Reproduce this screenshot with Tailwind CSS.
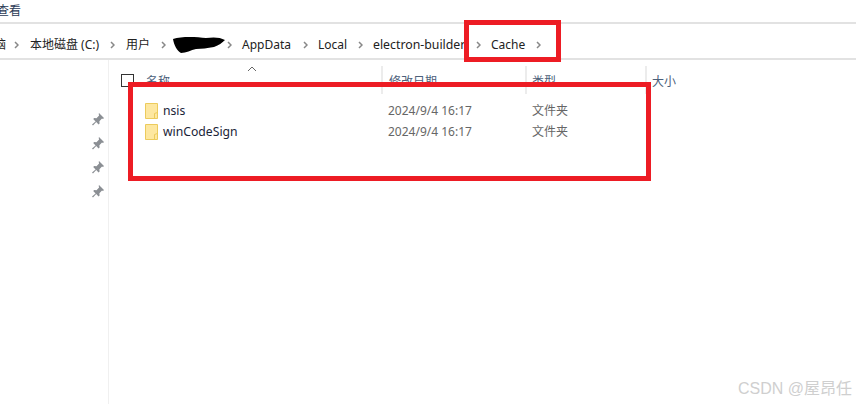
<!DOCTYPE html>
<html lang="zh-CN">
<head>
    <meta charset="UTF-8">
    <title>Cache</title>
    <script src="https://cdn.jsdelivr.net/npm/@tailwindcss/browser@4"></script>
</head>
<body class="relative w-[856px] h-[404px] overflow-hidden bg-white text-[12px] text-[#222] font-['Noto_Sans','Noto_Sans_CJK_SC',sans-serif]">
    <!-- menu -->
    <div class="h-[24px] border-b-2 border-[#e2e2e2] overflow-hidden">
        <span class="block ml-[-3px] mt-[3px] text-[#2b3a55] leading-[16px]">查看</span>
    </div>

    <!-- address bar -->
    <div class="h-[36px] border-b-2 border-[#e2e2e2] flex items-center overflow-hidden pt-[8px]">
        <span class="w-[6px] overflow-hidden flex justify-end shrink-0"><span class="shrink-0">脑</span></span>
        <svg class="ml-[8px] w-[5px] h-[8px] shrink-0" viewBox="0 0 5 8"><path d="M1 1l3 3-3 3" fill="none" stroke="#888" stroke-width="1.5"/></svg>
        <span class="ml-[11px] w-[70px] shrink-0 whitespace-nowrap">本地磁盘 (C:)</span>
        <svg class="ml-[10px] w-[5px] h-[8px] shrink-0" viewBox="0 0 5 8"><path d="M1 1l3 3-3 3" fill="none" stroke="#888" stroke-width="1.5"/></svg>
        <span class="ml-[11px] w-[25px] shrink-0">用户</span>
        <svg class="ml-[10px] w-[5px] h-[8px] shrink-0" viewBox="0 0 5 8"><path d="M1 1l3 3-3 3" fill="none" stroke="#888" stroke-width="1.5"/></svg>
        <svg class="ml-[6px] w-[54px] h-[18px] shrink-0" viewBox="0 0 54 18"><path d="M1 3C10 0 25 1 34 2c7-1 14-1 19 2-3 3-6 5-11 7-7 1-12 2-18 2-5 1-10 4-15 4C5 15 2 9 1 3z" fill="#000"/></svg>
        <svg class="ml-[1px] w-[5px] h-[8px] shrink-0" viewBox="0 0 5 8"><path d="M1 1l3 3-3 3" fill="none" stroke="#888" stroke-width="1.5"/></svg>
        <span class="ml-[10px] w-[51px] shrink-0">AppData</span>
        <svg class="ml-[10px] w-[5px] h-[8px] shrink-0" viewBox="0 0 5 8"><path d="M1 1l3 3-3 3" fill="none" stroke="#888" stroke-width="1.5"/></svg>
        <span class="ml-[10px] w-[30px] shrink-0">Local</span>
        <svg class="ml-[10px] w-[5px] h-[8px] shrink-0" viewBox="0 0 5 8"><path d="M1 1l3 3-3 3" fill="none" stroke="#888" stroke-width="1.5"/></svg>
        <span class="ml-[10px] w-[93px] shrink-0 whitespace-nowrap text-[12.3px]">electron-builder</span>
        <svg class="ml-[10px] w-[5px] h-[8px] shrink-0" viewBox="0 0 5 8"><path d="M1 1l3 3-3 3" fill="none" stroke="#888" stroke-width="1.5"/></svg>
        <span class="ml-[10px] w-[36px] shrink-0">Cache</span>
        <svg class="ml-[9px] w-[5px] h-[8px] shrink-0" viewBox="0 0 5 8"><path d="M1 1l3 3-3 3" fill="none" stroke="#888" stroke-width="1.5"/></svg>
    </div>

    <div class="flex h-[344px]">
        <!-- quick access pins -->
        <div class="w-[109px] shrink-0 border-r border-[#f0f0f0] flex flex-col items-end pt-[51px] pr-[2px] gap-[8px]">
            <svg class="w-[16px] h-[16px]" viewBox="0 0 16 16"><path d="M9 2l5 5-1 1-1-.4-2.6 2.6.2 2.3-1 1-2.4-2.5L3 14.6l-1-1 3.6-3.2L3.200 8l1-1 2.300.2L9.100 4.600 8.700 3.100z" fill="#8b8f94"/></svg>
            <svg class="w-[16px] h-[16px]" viewBox="0 0 16 16"><path d="M9 2l5 5-1 1-1-.4-2.6 2.6.2 2.3-1 1-2.4-2.5L3 14.6l-1-1 3.6-3.2L3.200 8l1-1 2.300.2L9.100 4.600 8.700 3.100z" fill="#8b8f94"/></svg>
            <svg class="w-[16px] h-[16px]" viewBox="0 0 16 16"><path d="M9 2l5 5-1 1-1-.4-2.6 2.6.2 2.3-1 1-2.4-2.5L3 14.6l-1-1 3.6-3.2L3.200 8l1-1 2.300.2L9.100 4.600 8.700 3.100z" fill="#8b8f94"/></svg>
            <svg class="w-[16px] h-[16px]" viewBox="0 0 16 16"><path d="M9 2l5 5-1 1-1-.4-2.6 2.6.2 2.3-1 1-2.4-2.5L3 14.6l-1-1 3.6-3.2L3.200 8l1-1 2.300.2L9.100 4.600 8.700 3.100z" fill="#8b8f94"/></svg>
        </div>

        <!-- file list -->
        <div class="flex-1 relative">
            <!-- sort arrow -->
            <svg class="absolute left-[138px] top-[6px] w-[10px] h-[6px]" viewBox="0 0 10 6"><path d="M1 5l4-4 4 4" fill="none" stroke="#666" stroke-width="1"/></svg>

            <div class="flex h-[28px] mt-[6px] text-[#4c607a]">
                <div class="w-[272px] shrink-0 flex items-center pl-[12px]">
                    <span class="w-[13px] h-[13px] border border-[#333] shrink-0"></span>
                    <span class="ml-[12px] mt-[4px]">名称</span>
                </div>
                <div class="w-[144px] shrink-0 border-l-2 border-[#ececec] pl-[6px] pt-[7px]">修改日期</div>
                <div class="w-[120px] shrink-0 border-l-2 border-[#ececec] pl-[5px] pt-[7px]">类型</div>
                <div class="border-l-2 border-[#ececec] pl-[5px] pt-[7px]">大小</div>
            </div>

            <div class="mt-[6px]">
                <div class="flex items-center h-[21px]">
                    <svg class="ml-[36px] w-[13px] h-[16px] shrink-0" viewBox="0 0 13 16"><path d="M.5.500h12v15H.5z" fill="#fde7a0" stroke="#eccb5c"/><path d="M9.500 15.500V10.500l3-1" stroke="#eccb5c" fill="none"/></svg>
                    <span class="ml-[5px] w-[225px] shrink-0 pt-[1px] text-[#1a2438] text-[12.2px]">nsis</span>
                    <span class="text-[#666]">2024/9/4 16:17</span>
                    <span class="ml-[60px] text-[#666]">文件夹</span>
                </div>
                <div class="flex items-center h-[21px]">
                    <svg class="ml-[36px] w-[13px] h-[16px] shrink-0" viewBox="0 0 13 16"><path d="M.5.500h12v15H.5z" fill="#fde7a0" stroke="#eccb5c"/><path d="M9.500 15.500V10.500l3-1" stroke="#eccb5c" fill="none"/></svg>
                    <span class="ml-[5px] w-[225px] shrink-0 pt-[1px] text-[#1a2438] text-[12.2px]">winCodeSign</span>
                    <span class="text-[#666]">2024/9/4 16:17</span>
                    <span class="ml-[60px] text-[#666]">文件夹</span>
                </div>
            </div>
        </div>
    </div>

    <!-- annotations drawn over the screenshot -->
    <div class="absolute left-[464px] top-[20px] w-[97px] h-[42px] border-[5px] border-[#ed1c24]"></div>
    <div class="absolute left-[128px] top-[82px] w-[523px] h-[99px] border-[5px] border-[#ed1c24]"></div>

    <!-- watermark -->
    <div class="absolute right-[4px] bottom-[5px] text-[16px] leading-[20px] text-[#cfcfcf] font-['Liberation_Sans','Noto_Sans_CJK_SC',sans-serif]">CSDN @屋昂任</div>
</body>
</html>
